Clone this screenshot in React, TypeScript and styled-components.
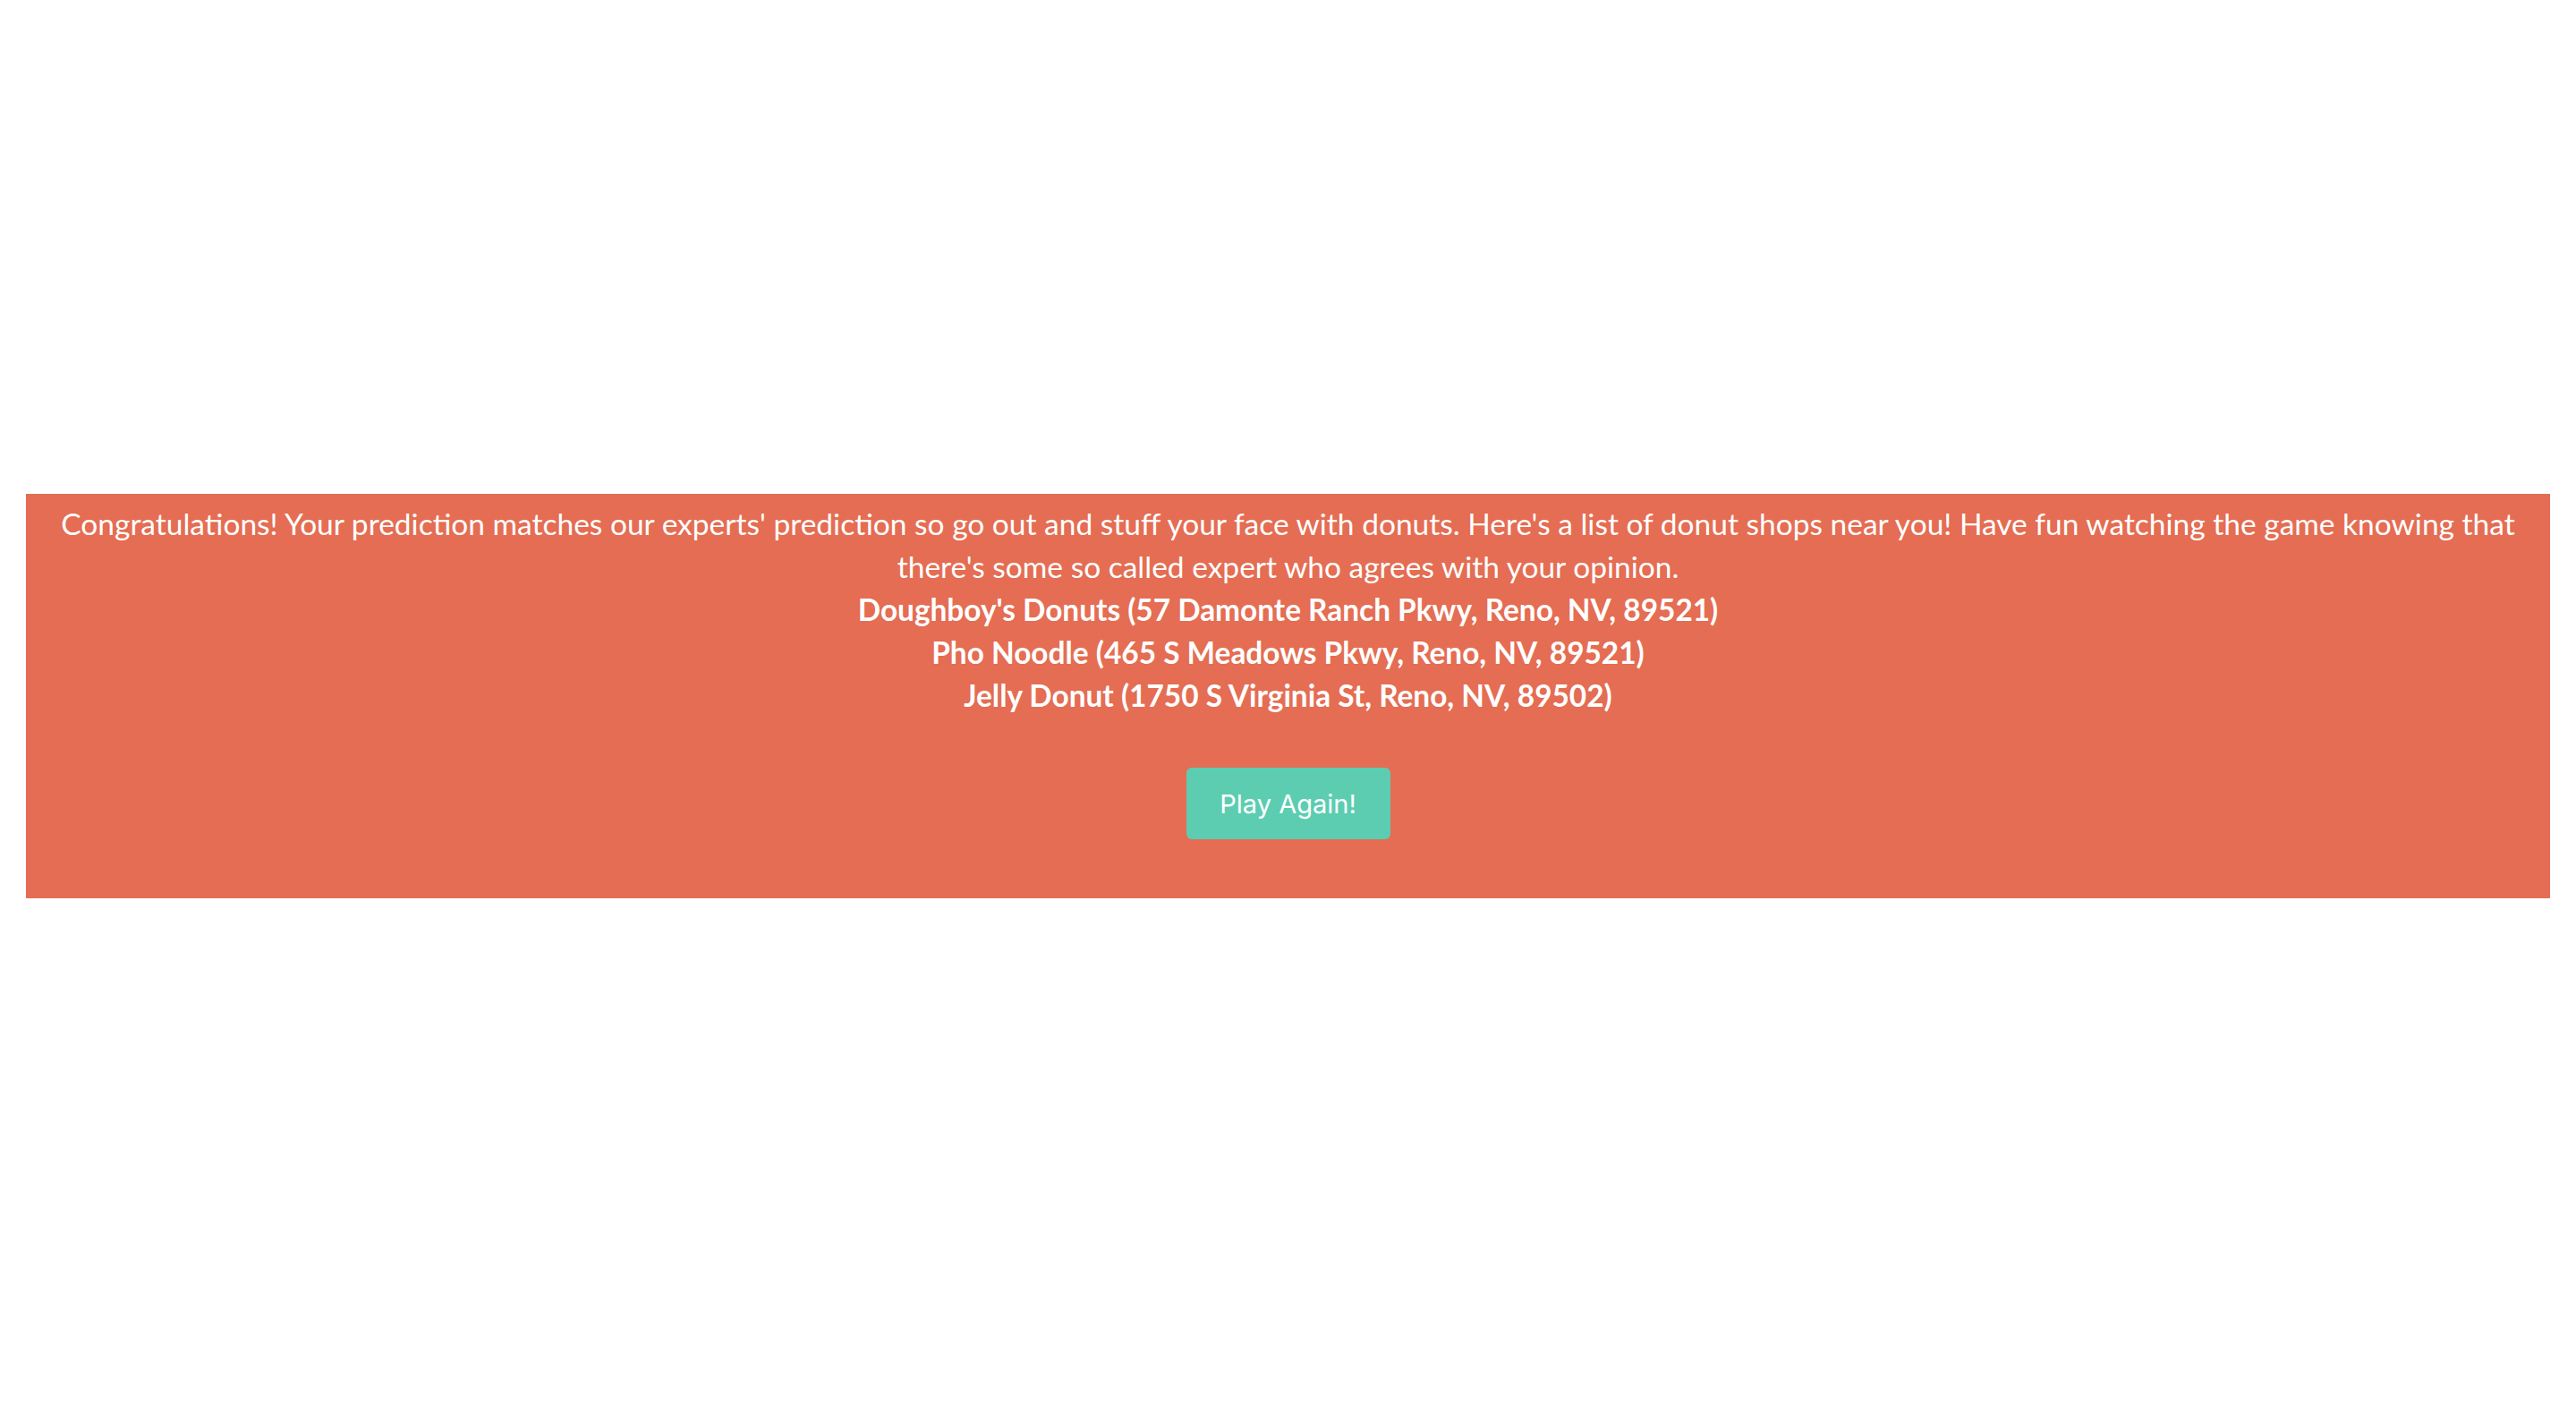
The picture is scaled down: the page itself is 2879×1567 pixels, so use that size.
import React from "react";
import styled, { createGlobalStyle } from "styled-components";

const GlobalStyle = createGlobalStyle`
  html, body {
    margin: 0;
    padding: 0;
    background: #ffffff;
  }
  body {
    font-family: "Lato", "Open Sans", sans-serif;
  }
`;

const Page = styled.div`
  min-height: 1567px;
  padding: 552px 29px 0;
  box-sizing: border-box;
`;

const Panel = styled.section`
  background: #e46d53;
  color: #ffffff;
  display: flex;
  flex-direction: column;
  align-items: center;
  padding: 9px 20px 66px;
  text-align: center;
`;

const Message = styled.p`
  margin: 0;
  max-width: 2770px;
  font-family: "Lato", "Open Sans", sans-serif;
  font-size: 33.5px;
  font-weight: 400;
  line-height: 48px;
`;

const Shop = styled.p`
  margin: 0;
  font-family: "Lato", "Open Sans", sans-serif;
  font-size: 33.4px;
  font-weight: 700;
  line-height: 48px;
`;

const PlayButton = styled.button`
  margin-top: 57px;
  width: 228px;
  height: 80px;
  border: none;
  border-radius: 6px;
  background: #5ccdb1;
  color: #ffffff;
  font-family: "Inter", "Roboto", sans-serif;
  font-size: 29px;
  font-weight: 400;
  cursor: pointer;
`;

const shops = [
  "Doughboy's Donuts (57 Damonte Ranch Pkwy, Reno, NV, 89521)",
  "Pho Noodle (465 S Meadows Pkwy, Reno, NV, 89521)",
  "Jelly Donut (1750 S Virginia St, Reno, NV, 89502)",
];

export default function App() {
  return (
    <>
      <GlobalStyle />
      <Page>
        <Panel>
          <Message>
            Congratulations! Your prediction matches our experts' prediction so go out and stuff your face with donuts. Here's a list of donut shops near you! Have fun watching the game knowing that there's some so called expert who agrees with your opinion.
          </Message>
          {shops.map((s) => (
            <Shop key={s}>{s}</Shop>
          ))}
          <PlayButton>Play Again!</PlayButton>
        </Panel>
      </Page>
    </>
  );
}
